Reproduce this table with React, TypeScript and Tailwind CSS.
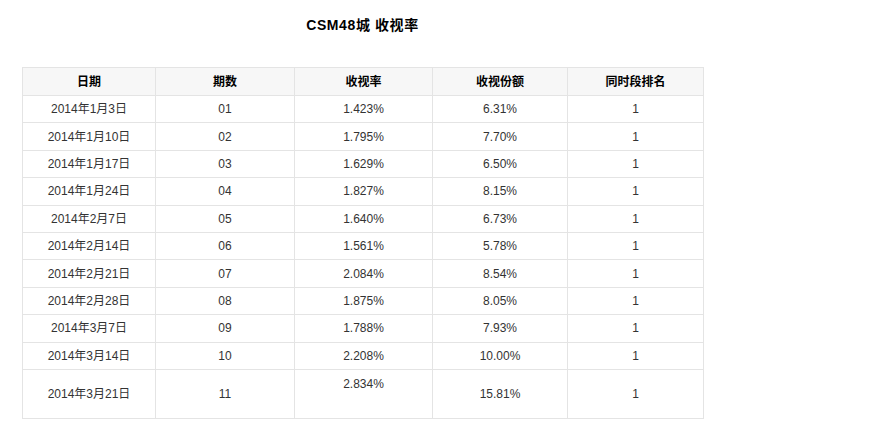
const rows: [string, string, string, string, string][] = [
  ["2014年1月3日", "01", "1.423%", "6.31%", "1"],
  ["2014年1月10日", "02", "1.795%", "7.70%", "1"],
  ["2014年1月17日", "03", "1.629%", "6.50%", "1"],
  ["2014年1月24日", "04", "1.827%", "8.15%", "1"],
  ["2014年2月7日", "05", "1.640%", "6.73%", "1"],
  ["2014年2月14日", "06", "1.561%", "5.78%", "1"],
  ["2014年2月21日", "07", "2.084%", "8.54%", "1"],
  ["2014年2月28日", "08", "1.875%", "8.05%", "1"],
  ["2014年3月7日", "09", "1.788%", "7.93%", "1"],
  ["2014年3月14日", "10", "2.208%", "10.00%", "1"],
];

const cell = "border border-[#e4e4e4] text-center align-middle p-0";

export default function App() {
  return (
    <div className="min-h-[421px] bg-white font-['Liberation_Sans','Noto_Sans_CJK_SC',sans-serif] text-[12px] text-[#333]">
      <div className="ml-[22px] w-[681px] pt-[15px]">
        <h1 className="text-center text-[14px] font-bold leading-[20px] tracking-[0.6px] text-black">CSM48城 收视率</h1>
        <table className="mt-[32px] w-[681px] border-collapse table-fixed">
          <colgroup>
            <col className="w-[133px]" />
            <col className="w-[139px]" />
            <col className="w-[138px]" />
            <col className="w-[135px]" />
            <col className="w-[136px]" />
          </colgroup>
          <thead>
            <tr className="h-[28px] bg-[#f7f7f7] font-bold text-black">
              <th className={cell}>日期</th>
              <th className={cell}>期数</th>
              <th className={cell}>收视率</th>
              <th className={cell}>收视份额</th>
              <th className={cell}>同时段排名</th>
            </tr>
          </thead>
          <tbody>
            {rows.map((r) => (
              <tr key={r[0]} className="h-[27.4px]">
                {r.map((v, i) => (
                  <td key={i} className={cell}>
                    {v}
                  </td>
                ))}
              </tr>
            ))}
            <tr className="h-[49px]">
              <td className={cell}>2014年3月21日</td>
              <td className={cell}>11</td>
              <td className={cell}>
                <div className="leading-[19px]">2.834%</div>
                <div className="leading-[19px]">&nbsp;</div>
              </td>
              <td className={cell}>15.81%</td>
              <td className={cell}>1</td>
            </tr>
          </tbody>
        </table>
      </div>
    </div>
  );
}
